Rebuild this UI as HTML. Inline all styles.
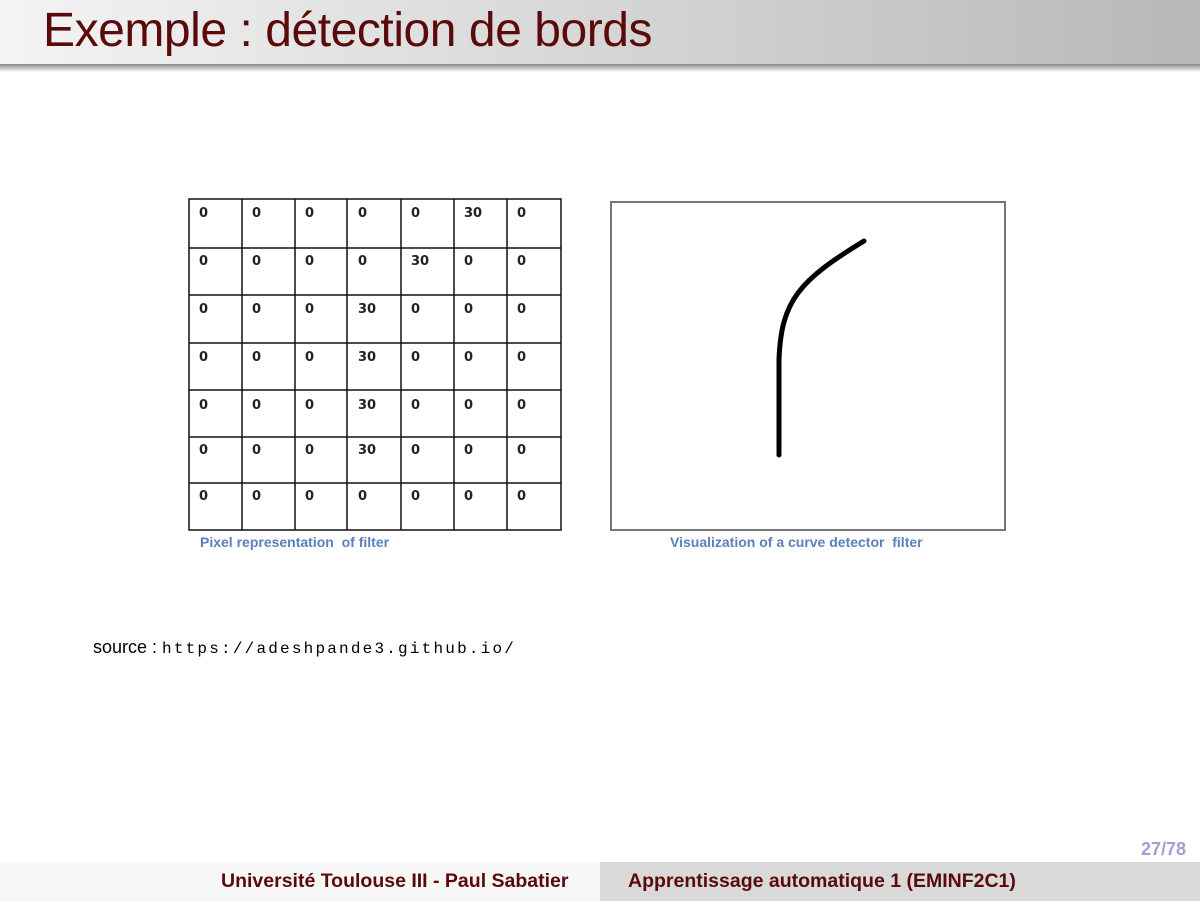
<!DOCTYPE html>
<html><head><meta charset="utf-8"><style>
body{margin:0;width:1200px;height:901px;position:relative;background:#fff;font-family:"Liberation Sans",sans-serif;overflow:hidden}
.hdr{position:absolute;left:0;top:0;width:1200px;height:64px;background:linear-gradient(to right,#f4f4f4,#b8b8b8)}
.hdr h1{margin:0;position:absolute;left:43px;top:3px;font-weight:normal;font-size:48px;line-height:56px;color:#5a0a0a;letter-spacing:-0.45px}
.shadow{position:absolute;left:0;top:64px;width:1200px;height:8px;background:linear-gradient(#888,#fff)}
.cap{position:absolute;font-size:14px;color:#5b7fbf;font-weight:bold}
.src{position:absolute;left:93px;top:637px;font-size:18px;color:#000}
.src span{font-family:"Liberation Mono",monospace;font-size:16px;letter-spacing:2.2px}
.f1{position:absolute;left:0;top:862px;width:600px;height:39px;background:#f7f7f7}
.f2{position:absolute;left:600px;top:862px;width:600px;height:39px;background:#d9d9d9}
.ft{position:absolute;top:870px;font-size:19.5px;font-weight:bold;color:#5a0a0a}
</style></head><body>
<div class="hdr"><h1>Exemple : détection de bords</h1></div>
<div class="shadow"></div>
<svg style="position:absolute;left:0;top:0" width="1200" height="901">
<g stroke="#111" stroke-width="1.5" fill="none">
<rect x="189" y="199" width="372" height="331"/>
<path d="M242 199V530M295 199V530M347 199V530M401 199V530M454 199V530M507 199V530"/>
<path d="M189 248H561M189 295H561M189 343H561M189 390H561M189 437H561M189 483H561"/>
</g>
<g font-family="DejaVu Sans,sans-serif" font-size="13" font-weight="bold" fill="#222">
<text x="199" y="217">0</text><text x="252" y="217">0</text><text x="305" y="217">0</text><text x="358" y="217">0</text><text x="411" y="217">0</text><text x="464" y="217">30</text><text x="517" y="217">0</text>
<text x="199" y="265">0</text><text x="252" y="265">0</text><text x="305" y="265">0</text><text x="358" y="265">0</text><text x="411" y="265">30</text><text x="464" y="265">0</text><text x="517" y="265">0</text>
<text x="199" y="313">0</text><text x="252" y="313">0</text><text x="305" y="313">0</text><text x="358" y="313">30</text><text x="411" y="313">0</text><text x="464" y="313">0</text><text x="517" y="313">0</text>
<text x="199" y="361">0</text><text x="252" y="361">0</text><text x="305" y="361">0</text><text x="358" y="361">30</text><text x="411" y="361">0</text><text x="464" y="361">0</text><text x="517" y="361">0</text>
<text x="199" y="409">0</text><text x="252" y="409">0</text><text x="305" y="409">0</text><text x="358" y="409">30</text><text x="411" y="409">0</text><text x="464" y="409">0</text><text x="517" y="409">0</text>
<text x="199" y="454">0</text><text x="252" y="454">0</text><text x="305" y="454">0</text><text x="358" y="454">30</text><text x="411" y="454">0</text><text x="464" y="454">0</text><text x="517" y="454">0</text>
<text x="199" y="500">0</text><text x="252" y="500">0</text><text x="305" y="500">0</text><text x="358" y="500">0</text><text x="411" y="500">0</text><text x="464" y="500">0</text><text x="517" y="500">0</text>
</g>
<rect x="611" y="202" width="394" height="328" fill="none" stroke="#777" stroke-width="2"/>
<path d="M779 455 L779 360 C781 300 800 280 864 241" fill="none" stroke="#000" stroke-width="5" stroke-linecap="round"/>
</svg>
<div class="cap" style="left:200px;top:534px">Pixel representation&nbsp; of filter</div>
<div class="cap" style="left:670px;top:534px">Visualization of a curve detector&nbsp; filter</div>
<div class="src">source : <span>https://adeshpande3.github.io/</span></div>
<div style="position:absolute;left:1141px;top:839px;font-size:18px;font-weight:bold;color:#a0a0d0">27/78</div>
<div class="f1"></div><div class="f2"></div>
<div class="ft" style="left:221px">Université Toulouse III - Paul Sabatier</div>
<div class="ft" style="left:628px">Apprentissage automatique 1 (EMINF2C1)</div>
</body></html>
